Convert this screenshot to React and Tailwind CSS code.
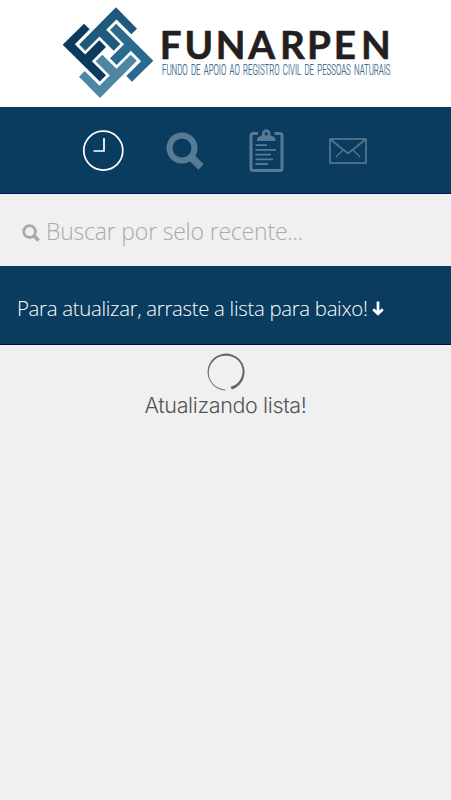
const ARM = '84,71 101,88 56.500,132.500 87.500,163.500 130,121 150,141 107.500,183.500 150,226 131.500,244.500 20,134';

function Logo() {
  return (
    <svg className="h-[107px] w-[451px]" viewBox="0 0 451 107">
      <g transform="translate(56 0) scale(0.33333)">
        <polygon points={ARM} fill="#0b3a5c" />
        <polygon points={ARM} fill="#1f5a7d" transform="rotate(90 156 158)" />
        <polygon points={ARM} fill="#2b698f" transform="rotate(180 156 158)" />
        <polygon points={ARM} fill="#4d87a3" transform="rotate(270 156 158)" />
      </g>
      <text x="159.800 184.500 215.700 248.300 280 307 333.700 361" y="59" fontFamily="Lato, sans-serif" fontWeight="700" fontSize="38.600" fill="#231f20" stroke="#231f20" strokeWidth="0.600">FUNARPEN</text>
      <text x="162" y="74.800" fontFamily="Roboto, sans-serif" fontSize="14" fill="#2a6084" stroke="#2a6084" strokeWidth="0.200" wordSpacing="2.500" textLength="228.500" lengthAdjust="spacingAndGlyphs">FUNDO DE APOIO AO REGISTRO CIVIL DE PESSOAS NATURAIS</text>
    </svg>
  );
}

function ClockIcon() {
  return (
    <svg className="h-[42px] w-[42px]" viewBox="0 0 42 42" fill="none" stroke="#fff">
      <circle cx="21.300" cy="20.600" r="19.500" strokeWidth="1.700" />
      <path d="M22 8v13H11.500" strokeWidth="1.700" />
    </svg>
  );
}

function SearchIcon({ className }) {
  return (
    <svg className={className} viewBox="0 0 38 38" fill="none" stroke="currentColor">
      <circle cx="16" cy="16" r="12.500" strokeWidth="6" />
      <path d="M24 24l11 11" strokeWidth="7.500" />
    </svg>
  );
}

function ClipboardIcon() {
  return (
    <svg className="h-[44px] w-[36px] text-[#577b94]" viewBox="0 0 36 44" fill="none" stroke="currentColor">
      <path d="M10 4.500H5a2 2 0 0 0-2 2V39.500a2 2 0 0 0 2 2h27a2 2 0 0 0 2-2V6.500a2 2 0 0 0-2-2H26.500" strokeWidth="3" />
      <path fillRule="evenodd" fill="currentColor" stroke="none" d="M9 12V10.500Q9 8 13 7Q14 6.500 14 4.500a4.200 4.200 0 0 1 8.400 0Q22.400 6.500 23.400 7Q27.400 8 27.400 10.500V12ZM18.200 3.200a1.600 1.600 0 1 0 0 3.200a1.600 1.600 0 0 0 0-3.200Z" />
      <path d="M7.500 16.200H19M7.500 20.900H28M7.500 25.600H23M7.500 30.300H25M7.500 35H20" strokeWidth="1.800" />
    </svg>
  );
}

function MailIcon() {
  return (
    <svg className="h-[26px] w-[38px] text-[#53778f]" viewBox="0 0 38 26" fill="none" stroke="currentColor">
      <rect x="1" y="1" width="36" height="24" strokeWidth="1.700" />
      <path d="M1.500 1.500L19 15.500L36.500 1.500" strokeWidth="1.700" />
      <path d="M14 12L7 19M24 12l7 7" strokeWidth="1.200" />
    </svg>
  );
}

export default function App() {
  return (
    <div className="flex h-[800px] w-[451px] flex-col overflow-hidden bg-[#f0f0f0] font-['Open_Sans',sans-serif] font-light">
      <header className="h-[107px] shrink-0 bg-white">
        <Logo />
      </header>
      <nav className="flex h-[87px] shrink-0 items-center border-b border-[#00175a] bg-[#0a3c5f] pt-px pl-[82px]">
        <ClockIcon />
        <SearchIcon className="ml-[42px] h-[38px] w-[38px] text-[#577b94]" />
        <span className="ml-[44px]"><ClipboardIcon /></span>
        <span className="ml-[45px]"><MailIcon /></span>
      </nav>
      <div className="flex h-[72px] shrink-0 items-center pl-[22px] text-[#aaaaaa]">
        <SearchIcon className="mt-[5px] h-[18px] w-[18px]" />
        <span className="ml-[6px] mt-[2px] text-[23px] leading-8 tracking-[-0.2px] whitespace-nowrap">Buscar por selo recente...</span>
      </div>
      <div className="flex h-[79px] shrink-0 items-center border-b border-[#000a46] bg-[#0a3c5f] pl-[17px] text-white">
        <span className="mt-[6px] text-[20.4px] leading-7 tracking-[-0.31px] whitespace-nowrap">Para atualizar, arraste a lista para baixo!</span>
        <svg className="ml-[4px] mt-[6px] h-[15px] w-[12px]" viewBox="0 0 12 15" fill="none" stroke="currentColor">
          <path d="M6 .5v12M1.200 8.300L6 12.800l4.800-4.500" strokeWidth="2.700" />
        </svg>
      </div>
      <main className="flex flex-col items-center pt-[8px]">
        <svg className="h-[38px] w-[38px]" viewBox="0 0 38 38" fill="#666">
          <path d="M18.300 37.500A18.500 18.500 0 1 1 24.800 36.600L23.600 33.800A15.800 15.800 0 0 0 18.900 2.700A16.700 16.700 0 0 0 18.300 36.400Z" />
        </svg>
        <span className="text-[21.5px] leading-7 font-light tracking-[-0.36px] text-[#555] font-['Inter',sans-serif]">Atualizando lista!</span>
      </main>
    </div>
  );
}
